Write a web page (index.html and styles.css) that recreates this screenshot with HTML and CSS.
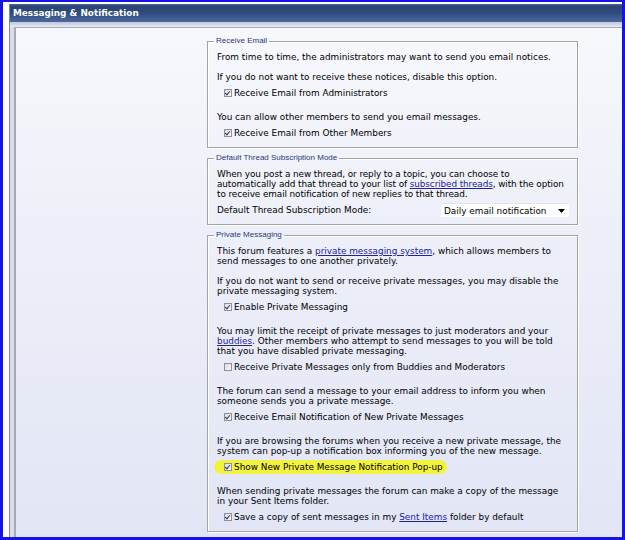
FILE: index.html
```html
<!DOCTYPE html>
<html lang="en">
<head>
    <meta charset="UTF-8">
    <title>Messaging &amp; Notification</title>
    <link rel="stylesheet" href="styles.css">
</head>
<body>
    <div class="frame">
        <div class="tborder">
            <div class="thead">Messaging &amp; Notification</div>
            <div class="tbody">
                <div class="panel">

                    <!-- Receive Email -->
                    <fieldset class="group">
                        <legend>Receive Email</legend>
                        <p>From time to time, the administrators may want to send you email notices.</p>
                        <p class="gap">If you do not want to receive these notices, disable this option.</p>
                        <div class="check"><span class="cb on"></span>Receive Email from Administrators</div>
                        <p class="after">You can allow other members to send you email messages.</p>
                        <div class="check"><span class="cb on"></span>Receive Email from Other Members</div>
                    </fieldset>

                    <!-- Default Thread Subscription Mode -->
                    <fieldset class="group">
                        <legend>Default Thread Subscription Mode</legend>
                        <p class="tight">When you post a new thread, or reply to a topic, you can choose to automatically add that thread to your list of <a href="#">subscribed threads</a>, with the option to receive email notification of new replies to that thread.</p>
                        <div class="row">
                            <span>Default Thread Subscription Mode:</span>
                            <div class="select">
                                <span>Daily email notification</span>
                                <svg width="7" height="4" viewBox="0 0 7 4"><path d="M0 0h7L3.5 4z" fill="#000"/></svg>
                            </div>
                        </div>
                    </fieldset>

                    <!-- Private Messaging -->
                    <fieldset class="group">
                        <legend>Private Messaging</legend>
                        <p>This forum features a <a href="#">private messaging system</a>, which allows members to send messages to one another privately.</p>
                        <p class="gap">If you do not want to send or receive private messages, you may disable the private messaging system.</p>
                        <div class="check"><span class="cb on"></span>Enable Private Messaging</div>
                        <p class="after">You may limit the receipt of private messages to just moderators and your <a href="#">buddies</a>. Other members who attempt to send messages to you will be told that you have disabled private messaging.</p>
                        <div class="check"><span class="cb"></span>Receive Private Messages only from Buddies and Moderators</div>
                        <p class="after">The forum can send a message to your email address to inform you when someone sends you a private message.</p>
                        <div class="check"><span class="cb on"></span>Receive Email Notification of New Private Messages</div>
                        <p class="after">If you are browsing the forums when you receive a new private message, the system can pop-up a notification box informing you of the new message.</p>
                        <div class="check"><span class="hl"><span class="cb on"></span>Show New Private Message Notification Pop-up</span></div>
                        <p class="after">When sending private messages the forum can make a copy of the message<br>in your Sent Items folder.</p>
                        <div class="check"><span class="cb on"></span>Save a copy of sent messages in my&nbsp;<a href="#">Sent Items</a>&nbsp;folder by default</div>
                    </fieldset>

                </div>
            </div>
        </div>
    </div>
</body>
</html>
```

FILE: styles.css
```css
html, body {
    margin: 0;
    background: #fff;
}

body {
    font-family: "DejaVu Sans", Verdana, sans-serif;
    font-size: 8.9px;
    color: #000;
}

.frame {
    box-sizing: border-box;
    width: 625px;
    height: 540px;
    border: 3px solid #1414e6;
    border-top-width: 2px;
    padding: 2px 0 0 6px;
    overflow: hidden;
}

.tborder {
    height: 100%;
    display: flex;
    flex-direction: column;
    border-left: 1px solid #7d86a6;
    background: #d9dce7;
}

.thead {
    height: 18px;
    line-height: 18px;
    padding-left: 3px;
    color: #fff;
    font-weight: bold;
    background: linear-gradient(#4f6a9b 0, #2a4475 2px, #2f4a7d 9px, #4c69a0 18px);
}

.tbody {
    flex: 1;
    padding: 5px 0 0 4px;
    background: linear-gradient(#bfc6da 0, #e9ecf3 5px, #dadde8 6px);
}

.panel {
    height: 100%;
    box-sizing: border-box;
    border-top: 1px solid #a3a8ba;
    border-left: 2px solid #a6abbc;
    padding: 8px 0 0 191px;
    background: linear-gradient(#f7f8fc 0, #eceef8 45%, #e2e5f5 100%);
}

.group {
    box-sizing: border-box;
    width: 371px;
    margin: 0 0 5px 0;
    padding: 6px 6px 7px 9px;
    border: 1px solid #a4a4a4;
    box-shadow: inset 1px 1px 0 #fff, 1px 1px 0 #fff;
}

.group legend {
    font-family: "Liberation Sans", Arial, sans-serif;
    font-size: 8px;
    line-height: 10px;
    color: #2b3578;
    padding: 0 2px;
    margin-left: -3px;
}

.group p {
    margin: 0;
    line-height: 10px;
}

.group p.gap {
    margin-top: 10px;
}

.group p.after {
    margin-top: 12px;
}

.group p.tight {
    letter-spacing: -0.1px;
}

a {
    color: #22229c;
}

.check {
    display: flex;
    align-items: center;
    height: 14px;
    margin-top: 4px;
    padding-left: 7px;
}

.cb {
    box-sizing: border-box;
    width: 8px;
    height: 8px;
    margin-right: 2px;
    border: 1px solid #8d919e;
    background: linear-gradient(135deg, #d9dbe2, #f7f7f9);
    position: relative;
}

.cb.on::after {
    content: "";
    position: absolute;
    left: 1px;
    top: 0;
    width: 2px;
    height: 4px;
    border: solid #2b3b55;
    border-width: 0 1px 1px 0;
    transform: rotate(40deg);
}

.hl {
    display: flex;
    align-items: center;
    height: 14px;
    margin-left: -10px;
    padding: 0 4px 0 10px;
    background: #f2f33e;
    border-radius: 7px;
}

.row {
    display: flex;
    justify-content: space-between;
    align-items: center;
    height: 14px;
    margin-top: 4px;
    padding-right: 2px;
}

.select {
    box-sizing: border-box;
    width: 128px;
    height: 14px;
    display: flex;
    justify-content: space-between;
    align-items: center;
    padding: 0 4px 0 3px;
    background: #fff;
    border-top: 1px solid #e4e4e4;
}
```
